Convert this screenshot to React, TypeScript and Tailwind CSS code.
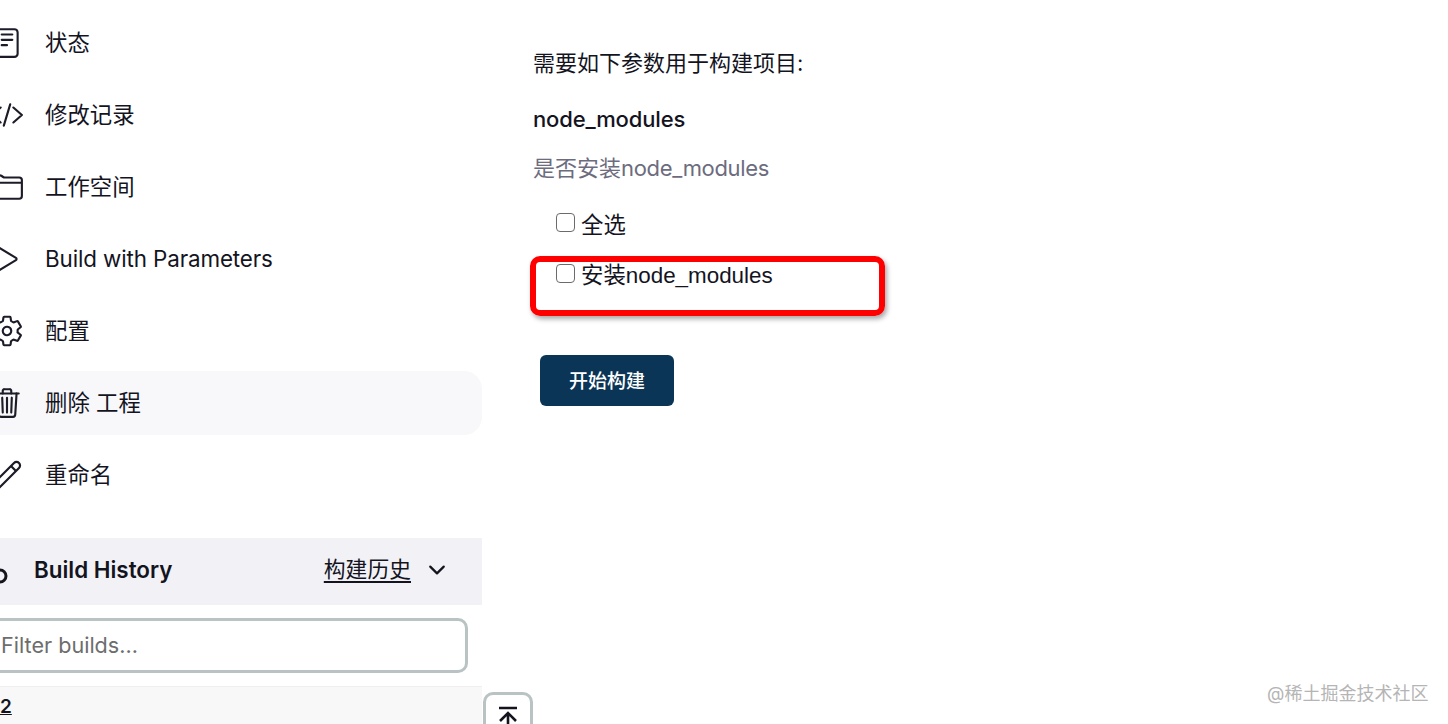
import {
  IoChevronDownOutline,
  IoCodeSlashOutline,
  IoFolderOutline,
  IoPlayOutline,
  IoReaderOutline,
  IoSettingsOutline,
  IoTrashOutline,
} from "react-icons/io5";

function PencilIcon({ className }: { className?: string }) {
  return (
    <svg viewBox="0 0 34 34" className={className} fill="none" stroke="currentColor" strokeWidth="2.2" strokeLinejoin="round">
      <path d="M4 25 24 5a3.5 3.5 0 0 1 5 5L9 30l-6 2z" />
      <path d="m21 8 5 5" />
    </svg>
  );
}

const navItems = [
  { label: "状态", icon: IoReaderOutline },
  { label: "修改记录", icon: IoCodeSlashOutline },
  { label: "工作空间", icon: IoFolderOutline },
  { label: "Build with Parameters", icon: IoPlayOutline, latin: true },
  { label: "配置", icon: IoSettingsOutline },
  { label: "删除 工程", icon: IoTrashOutline, active: true },
  { label: "重命名", icon: PencilIcon },
];

const fontStack = "font-['Inter','Noto_Sans_CJK_SC',sans-serif]";

export default function App() {
  return (
    <div className={`relative flex h-[724px] w-[1448px] overflow-hidden bg-white text-[22.4px] text-[#14141f] ${fontStack}`}>
      {/* sidebar, cut off by the left edge of the window */}
      <aside className="flex w-[482px] shrink-0 flex-col pt-[11px]">
        <nav className="flex flex-col gap-2">
          {navItems.map((item) => (
            <div
              key={item.label}
              className={`flex h-16 items-center rounded-r-[18px] ${item.active ? "bg-[#f8f8fa]" : ""}`}
            >
              <item.icon className="ml-[-10px] mr-[21px] h-[34px] w-[34px] shrink-0 text-[#1c1c28]" />
              <span className={item.latin ? "tracking-[-0.12px]" : ""}>{item.label}</span>
            </div>
          ))}
        </nav>

        <div className="mt-[31px] flex h-[67px] items-center bg-[#f2f2f6] pb-1">
          <svg viewBox="0 0 32 32" className="ml-[-16px] mr-[18px] h-8 w-8 shrink-0" fill="none" stroke="#14141f" strokeWidth="3">
            <circle cx="16" cy="22" r="6" />
          </svg>
          <span className="font-semibold">Build History</span>
          <span className="ml-auto text-[21.8px] underline underline-offset-[4px]">构建历史</span>
          <IoChevronDownOutline className="ml-[14px] mr-[33px] h-6 w-6" />
        </div>

        <div className="mr-[14px] mt-[13px] flex h-[55px] items-center rounded-r-[10px] border-[3px] border-l-0 border-[#bac3c3] bg-white pl-px text-[21.6px] text-[#6d6d6d]">
          Filter builds...
        </div>

        <div className="mt-[13px] flex-1 border-t border-[#efefef] bg-[#f8f8f8] pt-[6px] text-[19px] leading-[28px] font-semibold underline">
          2
        </div>
      </aside>

      {/* parameters form */}
      <main className="flex flex-col pl-[51px] text-[22px]">
        <p className="mt-[48px] leading-[30px]">需要如下参数用于构建项目:</p>
        <p className="mt-[26px] leading-[30px] font-medium tracking-[-0.15px]">node_modules</p>
        <p className="mt-[19px] leading-[30px] text-[#6c6c7e]">
          是否安装<span className="tracking-[-0.33px]">node_modules</span>
        </p>

        <label className="ml-[23px] mt-[29px] flex h-[30px] items-start font-['Liberation_Sans','Noto_Sans_CJK_SC',sans-serif] text-[22.4px]">
          <span className="mt-px h-[19px] w-[19px] shrink-0 rounded-[4px] border border-[#6b6b6b] bg-white" />
          <span className="ml-[6px] leading-[28px]">全选</span>
        </label>
        <label className="ml-[23px] mt-[19px] flex h-[30px] items-start font-['Liberation_Sans','Noto_Sans_CJK_SC',sans-serif] text-[22.4px]">
          <span className="mt-[3px] h-[19px] w-[19px] shrink-0 rounded-[4px] border border-[#6b6b6b] bg-white" />
          <span className="ml-[6px] leading-[30px]">安装node_modules</span>
        </label>

        <button className="ml-[7px] mt-[64px] h-[51px] w-[134px] rounded-[6px] bg-[#0a3556] pt-[3px] text-[19px] font-medium text-white">
          开始构建
        </button>
      </main>

      {/* red annotation drawn over the screenshot */}
      <div className="absolute left-[530px] top-[256px] h-[60px] w-[355px] rounded-[10px] border-[6px] border-[#fe0000] shadow-[2px_3px_5px_rgba(0,0,0,0.35)]" />

      {/* back to top */}
      <div className="absolute left-[483px] top-[692px] flex h-[50px] w-[50px] justify-center rounded-[10px] border-[3px] border-[#bac3c3] bg-white pt-[11px]">
        <svg viewBox="0 0 24 24" className="h-6 w-6" fill="none" stroke="#14141f" strokeWidth="2.6">
          <path d="M3 2h18M12 24V7M4 15l8-8 8 8" />
        </svg>
      </div>

      <span className="absolute left-[1267px] top-[682px] text-[18px] leading-[24px] text-[#b5b5b5]">@稀土掘金技术社区</span>
    </div>
  );
}
